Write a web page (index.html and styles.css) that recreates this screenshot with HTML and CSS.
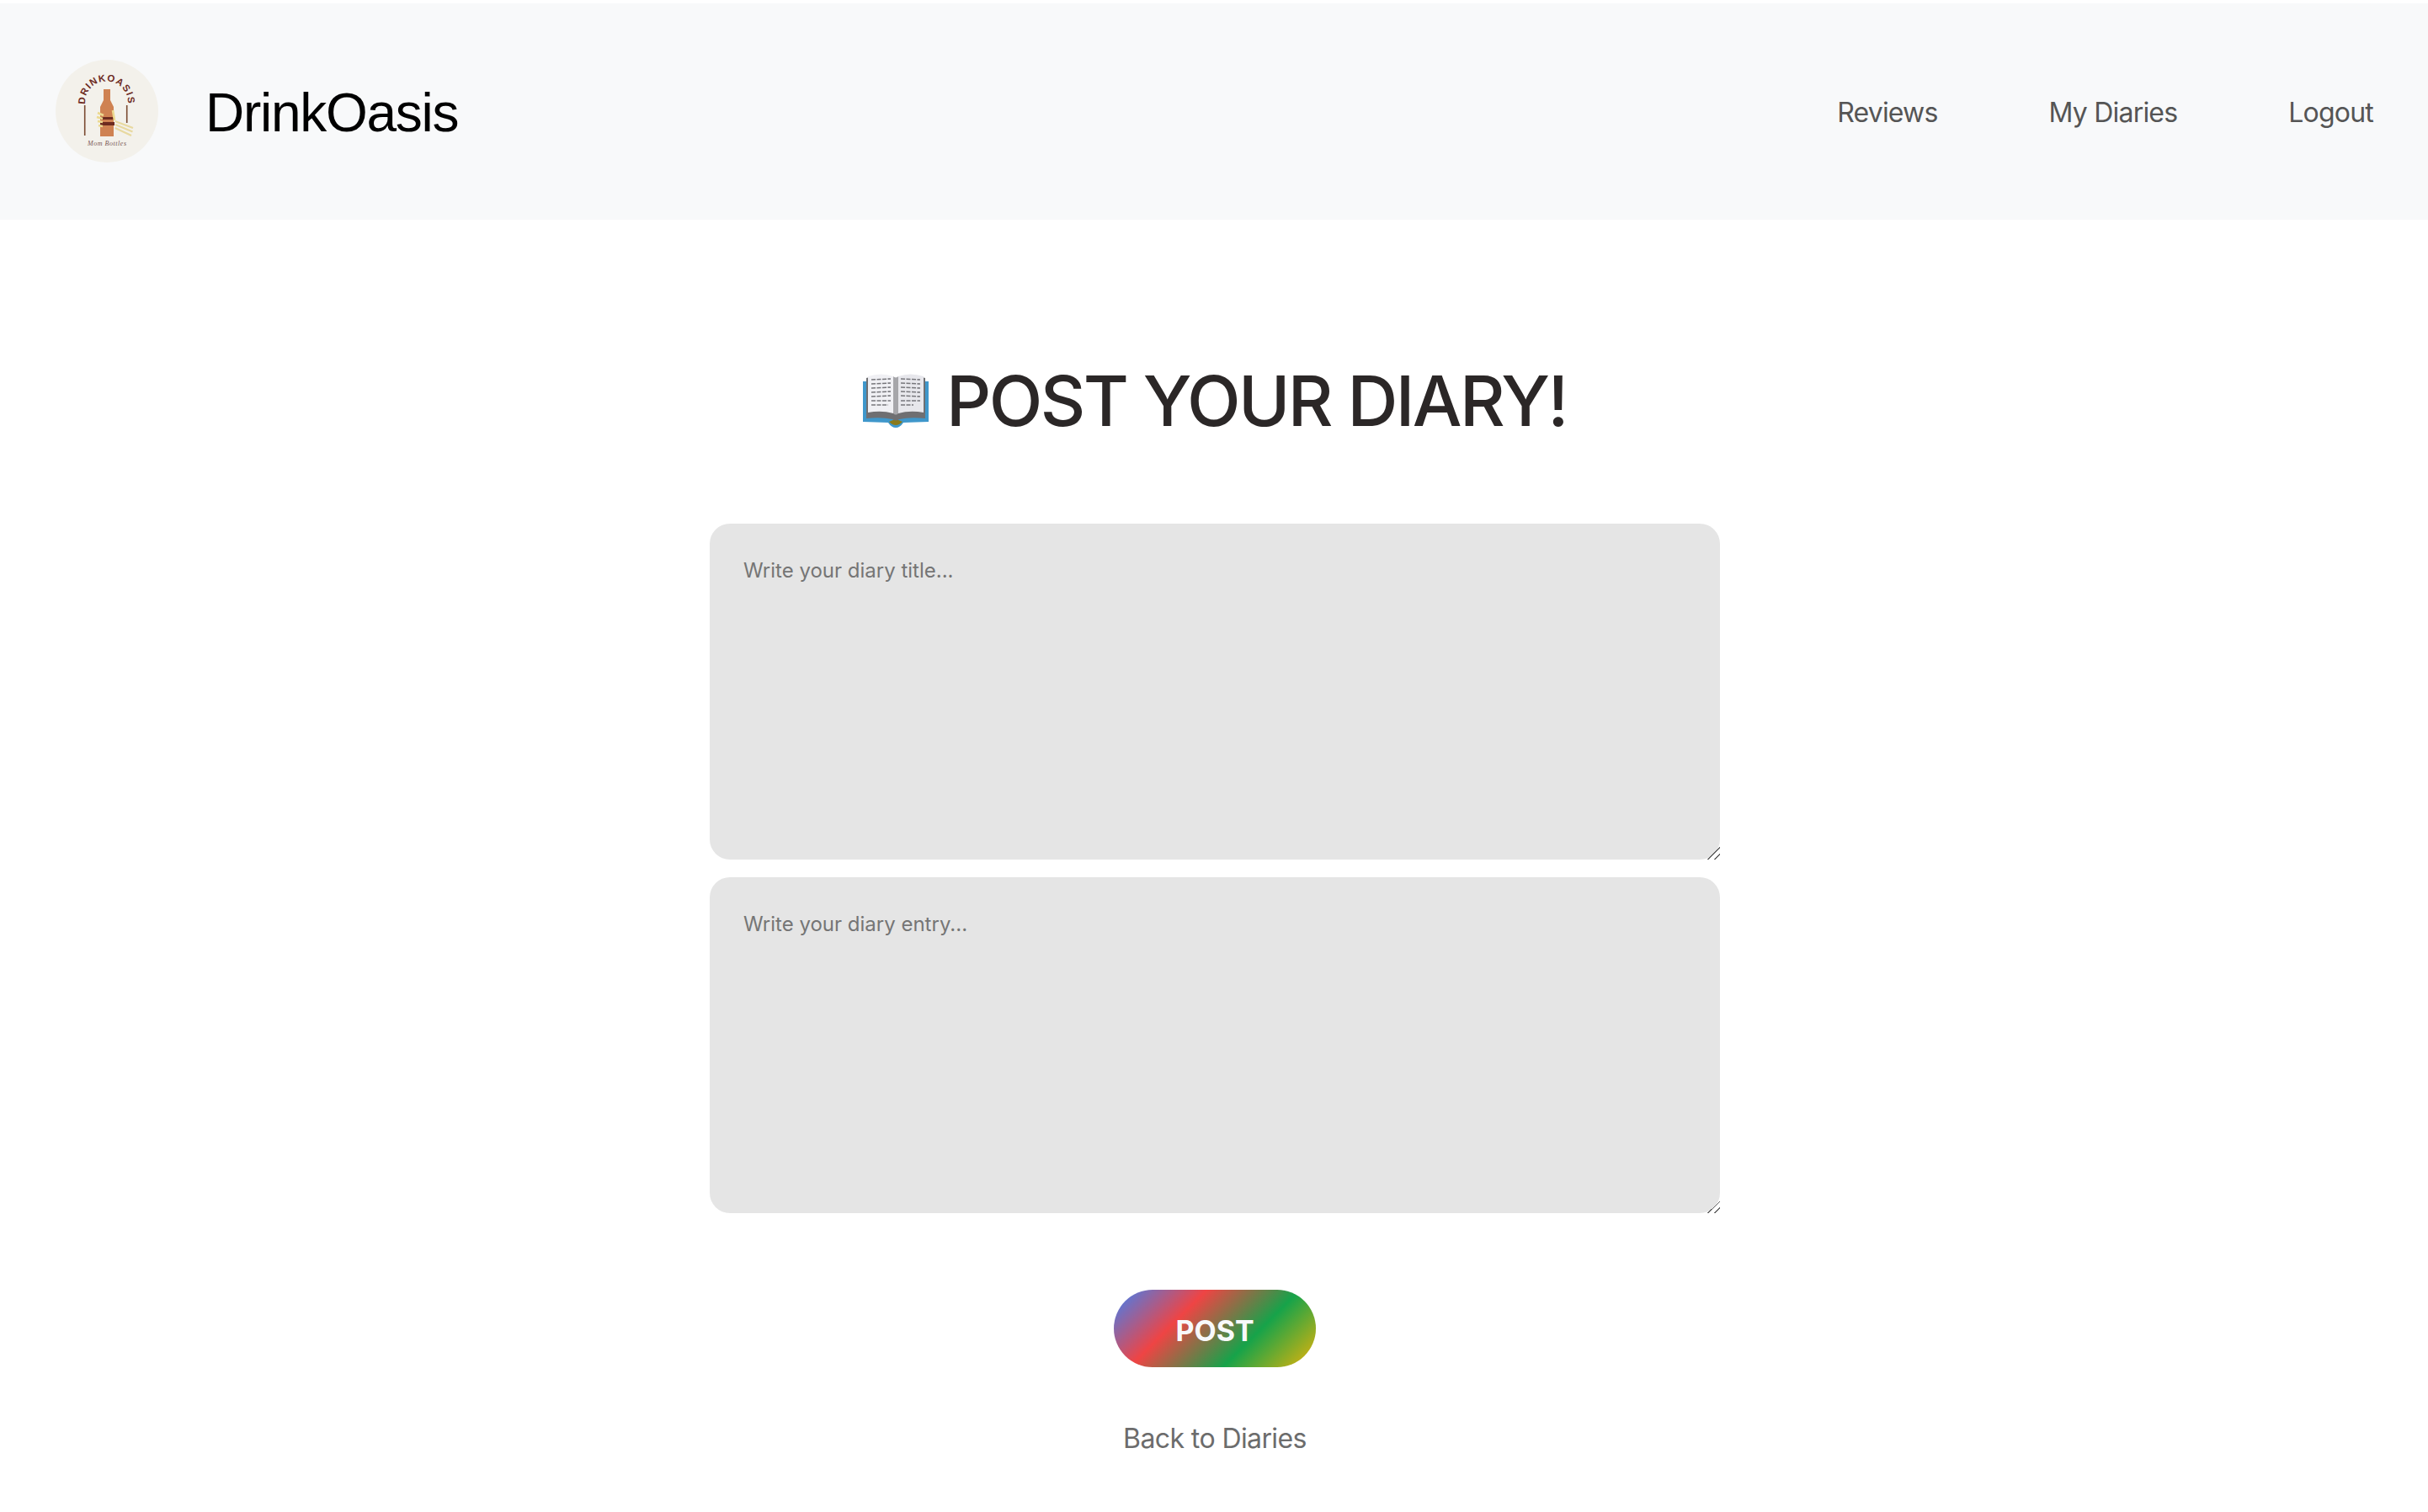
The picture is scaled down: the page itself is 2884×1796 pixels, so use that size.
FILE: index.html
```html
<!DOCTYPE html>
<html lang="en">
<head>
    <meta charset="UTF-8">
    <title>Post Your Diary</title>
    <link rel="stylesheet" href="styles.css">
</head>
<body>
    <header class="site-header">
        <div class="brand">
            <svg class="logo" viewBox="0 0 122 122" aria-hidden="true">
                <circle cx="61" cy="61" r="61" fill="#f3f1eb"/>
                <path id="logoArc" d="M35 51 A25.5 25.5 0 0 1 86 51" fill="none"/>
                <text class="logo-word"><textPath href="#logoArc" startOffset="50%" text-anchor="middle">DRINKOASIS</textPath></text>
                <path d="M34.7 54V90" stroke="#7a4a30" stroke-width="1.6" fill="none"/>
                <path d="M84.7 54V75" stroke="#7a4a30" stroke-width="1.6" fill="none"/>
                <path d="M70.7 73L92 81M71 77L91.5 85.5M70.7 81L90 90" stroke="#e8d9a0" stroke-width="2.2" fill="none"/>
                <path d="M57 35H65V48L69 56V91H53V56L57 48Z" fill="#cf8252"/>
                <path d="M53 68H70V71H53ZM53 74H70V78H53Z" fill="#6d2b1f"/>
                <path d="M50 63L57 66M49 68L56 70M50 73L56 74M51 78L56 79M68 60L70 72" stroke="#ecd98f" stroke-width="2.6" fill="none"/>
                <text class="logo-sub" x="61" y="102" text-anchor="middle" textLength="46">Mom Bottles</text>
            </svg>
            <span class="brand-name">DrinkOasis</span>
        </div>
        <nav class="main-nav">
            <a href="#">Reviews</a>
            <a href="#">My Diaries</a>
            <a href="#">Logout</a>
        </nav>
    </header>

    <main class="diary-page">
        <h1 class="page-title">
            <svg class="book" viewBox="0 0 78 64" aria-hidden="true">
                <path d="M0 9H78V57L48 58Q44 64 39 64Q34 64 30 58L0 57Z" fill="#3f97cb"/>
                <path d="M31 57Q39 52 47 57Q43 61 39 61Q35 61 31 57Z" fill="#8a7a1c"/>
                <path d="M4 5Q22 -1 39 5Q56 -1 74 5V53Q56 51 43 54Q39 57 35 54Q22 51 4 53Z" fill="#6f6f72"/>
                <path d="M6 3Q22 -2 36 3V47Q22 43 6 46Z" fill="#f0f0f4"/>
                <path d="M42 3Q56 -2 72 3V46Q56 43 42 47Z" fill="#e7e7ec"/>
                <path d="M36 3Q39 6 42 3V47Q39 50 36 47Z" fill="#a6a6aa"/>
                <path class="book-lines" d="M10 7L33 6M10 12L33 11M10 17L33 16M10 22L33 21M10 27L33 26M10 32L33 32M10 37L30 37M45 6L68 7M45 11L68 12M45 16L68 17M45 21L68 22M45 26L68 27M45 32L68 32M45 37L60 37"/>
            </svg>
            POST YOUR DIARY!
        </h1>

        <form class="diary-form">
            <textarea class="diary-input" placeholder="Write your diary title..."></textarea>
            <textarea class="diary-input" placeholder="Write your diary entry..."></textarea>
            <button type="button" class="post-btn">POST</button>
        </form>

        <a class="back-link" href="#">Back to Diaries</a>
    </main>
</body>
</html>
```

FILE: styles.css
```css
html, body {
    margin: 0;
    padding: 0;
}

body {
    background-color: white;
    font-family: Inter, "Liberation Sans", sans-serif;
    padding-top: 4px;
}

/* Cabecera */
.site-header {
    background-color: #f8f9fa;
    height: 255px;
    padding: 2px 65px 0 66px;
    display: flex;
    align-items: center;
    justify-content: space-between;
}

.brand {
    display: flex;
    align-items: center;
    gap: 56px;
}

.logo {
    width: 122px;
    height: 122px;
    margin-bottom: 3px;
}

.logo-word {
    font-family: "Liberation Sans", sans-serif;
    font-size: 11.5px;
    font-weight: bold;
    letter-spacing: 1.1px;
    fill: #6d2b1f;
}

.logo-sub {
    font-family: "Liberation Serif", serif;
    font-size: 8px;
    font-style: italic;
    fill: #7a5a55;
}

.brand-name {
    font-family: "Liberation Sans", sans-serif;
    font-size: 64px;
    letter-spacing: -1.28px;
    color: black;
}

.main-nav {
    display: flex;
    gap: 132px;
}

.main-nav a {
    color: #555;
    font-size: 32px;
    letter-spacing: -0.8px;
    text-decoration: none;
}

/* Contenido principal */
.diary-page {
    display: flex;
    flex-direction: column;
    align-items: center;
    padding-left: 2px;
}

.page-title {
    margin: 165px 0 0;
    color: #2b2727;
    font-size: 83px;
    font-weight: 500;
    line-height: 100px;
    letter-spacing: -2.6px;
    display: flex;
    align-items: center;
    gap: 21px;
}

.book {
    width: 78px;
    height: 64px;
}

.book-lines {
    stroke: #77777c;
    stroke-width: 1.6;
    stroke-dasharray: 5 1.5;
    fill: none;
}

.diary-form {
    margin-top: 96px;
    width: 1200px;
    display: flex;
    flex-direction: column;
    align-items: center;
}

.diary-input {
    box-sizing: border-box;
    width: 1200px;
    height: 399px;
    margin-bottom: 21px;
    padding: 41px 40px 40px;
    background-color: #e5e5e5;
    border: none;
    border-radius: 24px;
    font-family: Inter, sans-serif;
    font-size: 24px;
}

/* Tirador del textarea */
.diary-input::-webkit-resizer {
    background: linear-gradient(135deg, transparent 50%, #666 50% 56%, transparent 56% 76%, #666 76% 82%, transparent 82%);
}

.post-btn {
    margin-top: 70px;
    padding-top: 5px;
    width: 240px;
    height: 92px;
    border: none;
    border-radius: 46px;
    background: linear-gradient(135deg, #3b82f6, #ef4444, #16a34a, #eab308);
    color: #f8f9fa;
    font-family: Inter, sans-serif;
    font-size: 34px;
    font-weight: 700;
}

.back-link {
    margin-top: 65px;
    color: #6c6c6c;
    font-size: 32px;
    letter-spacing: -0.6px;
    text-decoration: none;
}
```
